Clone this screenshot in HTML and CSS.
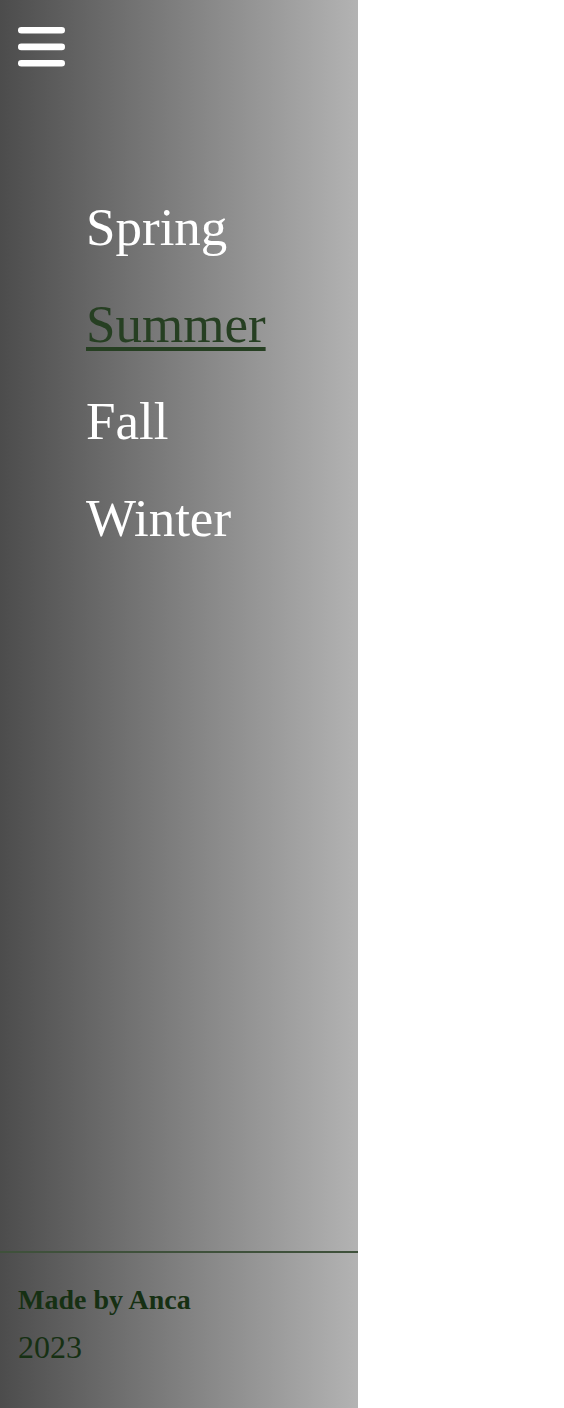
FILE: index.html
```html
<!DOCTYPE html>
<html lang="en">
<head>
<meta charset="utf-8">
<title>Seasons</title>
<link rel="stylesheet" href="styles.css">
</head>
<body>
<aside class="sidebar">
  <button class="menu-btn" aria-label="Menu">
    <svg width="47" height="40" viewBox="0 0 47 40">
      <rect x="0" y="0" width="47" height="6.6" rx="3.3" fill="#fff"/>
      <rect x="0" y="16.6" width="47" height="6.6" rx="3.3" fill="#fff"/>
      <rect x="0" y="33" width="47" height="6.6" rx="3.3" fill="#fff"/>
    </svg>
  </button>
  <nav class="nav">
    <ul class="nav-list">
      <li class="nav-item"><a class="nav-link" href="#">Spring</a></li>
      <li class="nav-item"><a class="nav-link active" href="#">Summer</a></li>
      <li class="nav-item"><a class="nav-link" href="#">Fall</a></li>
      <li class="nav-item"><a class="nav-link" href="#">Winter</a></li>
    </ul>
  </nav>
  <footer class="footer">
    <p class="credit">Made by Anca</p>
    <p class="year">2023</p>
  </footer>
</aside>
</body>
</html>
```
FILE: styles.css
```css
html, body {
  margin: 0;
  padding: 0;
  background: #fff;
  height: 100%;
}
body {
  font-family: "Liberation Serif", "Times New Roman", serif;
}
.sidebar {
  width: 358px;
  height: 1408px;
  box-sizing: border-box;
  display: flex;
  flex-direction: column;
  background: linear-gradient(to right, #4c4c4c, #b3b3b3);
}
.menu-btn {
  margin: 27px 0 0 18px;
  padding: 0;
  border: 0;
  background: none;
  width: 47px;
  height: 40px;
  display: block;
}
.menu-btn svg {
  display: block;
}
.nav {
  margin-top: 131px;
}
.nav-list {
  list-style: none;
  margin: 0;
  padding: 0 0 0 86px;
  display: flex;
  flex-direction: column;
  gap: 38px;
}
.nav-item {
  font-size: 53px;
  line-height: 59px;
}
.nav-link {
  color: #fff;
  text-decoration: none;
}
.nav-link.active {
  color: #263f22;
  text-decoration: underline;
  text-decoration-thickness: 4px;
  text-underline-offset: 5px;
}
.footer {
  margin-top: auto;
  border-top: 2px solid #3f513b;
  padding: 31px 18px 42px;
  color: #163013;
}
.credit {
  margin: 0;
  font-size: 28px;
  font-weight: bold;
  line-height: 32px;
}
.year {
  margin: 13px 0 0;
  font-size: 32px;
  line-height: 37px;
}
```
